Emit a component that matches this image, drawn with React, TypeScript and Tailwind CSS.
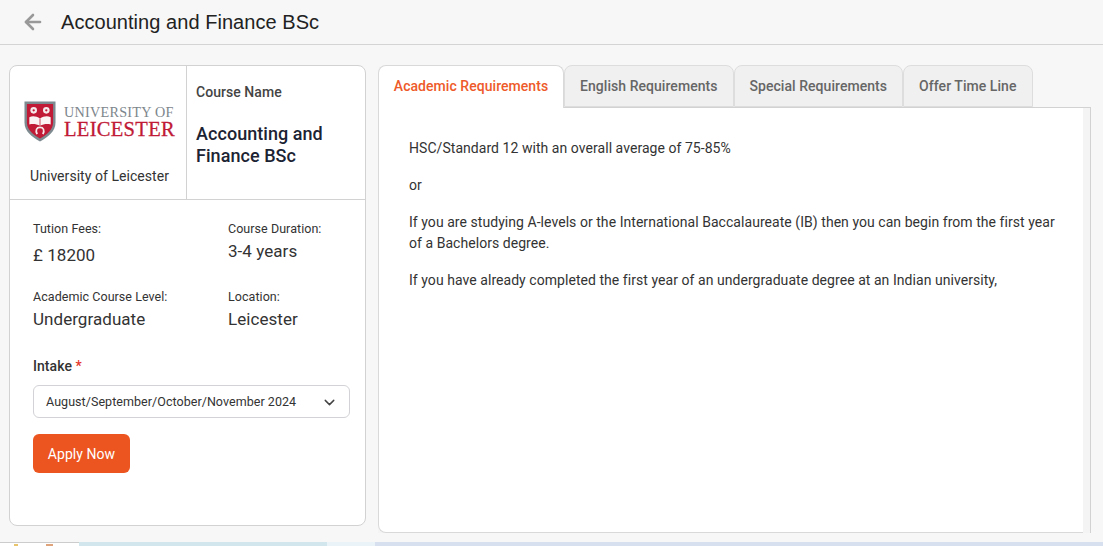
import { ArrowLeft, ChevronDown } from "lucide-react";

const tabs = ["English Requirements", "Special Requirements", "Offer Time Line"];

function LeicesterLogo() {
    return (
        <div className="flex items-center gap-2 h-[42px]">
            <svg width="32" height="41" viewBox="0 0 33 42">
                <path d="M0.5 0.5H32.5V22C32.5 31 25 37 16.5 41.5C8 37 0.5 31 0.5 22Z" fill="#7d8a90" />
                <path d="M3 3H30V22C30 29.5 23.5 34.5 16.5 38.5C9.5 34.5 3 29.5 3 22Z" fill="#c01a36" />
                <circle cx="10" cy="9.5" r="3.4" fill="#f6e9ea" />
                <circle cx="23" cy="9.5" r="3.4" fill="#f6e9ea" />
                <circle cx="10" cy="9.5" r="1.2" fill="#c01a36" />
                <circle cx="23" cy="9.5" r="1.2" fill="#c01a36" />
                <path d="M5.5 16.5C9 15 13 15.5 16.5 18C20 15.5 24 15 27.5 16.5V24C24 23 20 23.5 16.5 25.5C13 23.5 9 23 5.5 24Z" fill="#fbf3f3" />
                <path d="M16.5 18V25.5" stroke="#c01a36" strokeWidth="0.8" />
                <path d="M13.5 34C11.5 30 13 27 16.5 27C20 27 21.5 30 19.5 34" fill="none" stroke="#f6e9ea" strokeWidth="1.8" />
            </svg>
            <div className="flex flex-col font-['Liberation_Serif',serif] whitespace-nowrap mt-[1px]">
                <span className="text-[14.2px] leading-[15px] text-[#7d868c] tracking-[0.25px]">UNIVERSITY OF</span>
                <span className="text-[20.5px] leading-[19px] font-medium text-[#c01a36] [-webkit-text-stroke:0.3px_#c01a36] tracking-[0.3px]">LEICESTER</span>
            </div>
        </div>
    );
}

function Info({ label, value, big }: { label: string; value: string; big?: boolean }) {
    return (
        <div>
            <p className="text-[12.5px] leading-[14px] text-[#333]">{label}</p>
            <p className={`text-[#333] text-[17px] leading-5 ${big ? "mt-[9px]" : "mt-[5px]"}`}>{value}</p>
        </div>
    );
}

export default function App() {
    return (
        <div className="h-[546px] w-[1103px] flex flex-col overflow-hidden bg-[#f7f7f7] font-['Roboto',sans-serif] tracking-[0.05px] text-[#212529]">
            <header className="h-[45px] shrink-0 flex items-center border-b border-[#d4d4d4] pl-[21px]">
                <ArrowLeft size={24} strokeWidth={2.6} className="text-[#999]" />
                <h1 className="ml-4 text-[20px] font-['Liberation_Sans',sans-serif] text-[#222]">Accounting and Finance BSc</h1>
            </header>

            <main className="flex-1 min-h-0 flex items-start pl-[9px] pt-5 gap-3">
                <section className="w-[357px] h-[461px] bg-white border border-[#d2d2d2] rounded-lg">
                    <div className="flex h-[134px] border-b border-[#d2d2d2]">
                        <div className="w-[177px] border-r border-[#d2d2d2] flex flex-col items-center pt-[34px] pl-[3px]">
                            <LeicesterLogo />
                            <p className="mt-6 text-sm leading-5 text-[#333]">University of Leicester</p>
                        </div>
                        <div className="pl-[9px] pt-[18px]">
                            <p className="text-sm leading-4 font-medium text-[#444]">Course Name</p>
                            <p className="mt-[23px] text-lg leading-[22px] font-medium text-[#1c2333]">
                                Accounting and<br />Finance BSc
                            </p>
                        </div>
                    </div>

                    <div className="pl-[23px] pr-[15px] pt-[22px]">
                        <div className="grid grid-cols-[195px_1fr] gap-y-[25px]">
                            <Info label="Tution Fees:" value="£ 18200" big />
                            <Info label="Course Duration:" value="3-4 years" />
                            <Info label="Academic Course Level:" value="Undergraduate" />
                            <Info label="Location:" value="Leicester" />
                        </div>

                        <p className="mt-[27px] text-sm leading-5 font-medium text-[#333]">
                            Intake <span className="text-[#e5352b]">*</span>
                        </p>
                        <div className="mt-[9px] h-[33px] border border-[#d2d2d7] rounded-md flex items-center justify-between pl-3 pr-[11px] pt-[1px] text-[12.5px] text-[#333]">
                            <span>August/September/October/November 2024</span>
                            <ChevronDown size={17} strokeWidth={2} className="text-[#444]" />
                        </div>
                        <button className="mt-4 h-[39px] w-[97px] rounded-md bg-[#ec551f] text-white text-sm">Apply Now</button>
                    </div>
                </section>

                <section className="w-[713px] h-[468px] flex flex-col">
                    <div className="flex h-[43px] shrink-0 relative z-10">
                        <div className="w-[186px] h-[43px] pb-[2px] flex items-center justify-center bg-white border border-b-0 border-[#d9d9d9] rounded-t-lg text-sm font-medium text-[#ee5a2a]">
                            Academic Requirements
                        </div>
                        {tabs.map((t) => (
                            <div
                                key={t}
                                className="h-[42px] px-[15px] flex items-center bg-[#f0f0f0] border border-[#dddddd] rounded-t-lg text-sm font-medium text-[#666] whitespace-nowrap"
                            >
                                {t}
                            </div>
                        ))}
                    </div>
                    <div className="flex-1 -mt-[1px] bg-[#f4f4f4] border-t border-r border-[#d2d2d2] pr-[7px]">
                        <div className="h-full bg-white border-l border-b border-[#d9d9d9] rounded-bl-lg pl-[30px] pr-5 pt-[30px] text-sm leading-[21px] text-[#333]">
                            <p>HSC/Standard 12 with an overall average of 75-85%</p>
                            <p className="mt-4">or</p>
                            <p className="mt-4">
                                If you are studying A-levels or the International Baccalaureate (IB) then you can begin from the first year of a Bachelors degree.
                            </p>
                            <p className="mt-4">
                                If you have already completed the first year of an undergraduate degree at an Indian university,
                            </p>
                        </div>
                    </div>
                </section>
            </main>

            <div className="h-1 shrink-0 flex">
                <div className="w-[79px] bg-white border-t border-[#cccccc] flex items-end">
                    <div className="ml-[14px] w-1 h-[2px] bg-[#e8c46c]" />
                    <div className="ml-7 w-[7px] h-[2px] bg-[#dfa47c]" />
                </div>
                <div className="w-[248px] bg-[#d2e6ee]" />
                <div className="w-12 bg-[#eaf3f7]" />
                <div className="flex-1 bg-[#d6e0ee]" />
            </div>
        </div>
    );
}
